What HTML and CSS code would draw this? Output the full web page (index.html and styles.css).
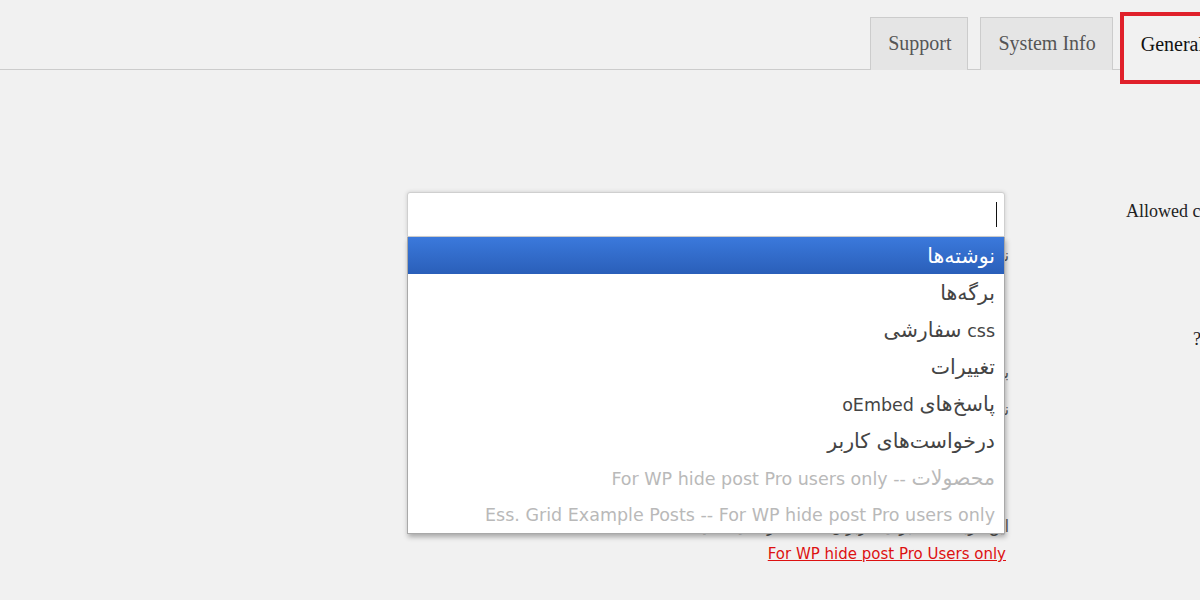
FILE: index.html
```html
<!DOCTYPE html>
<html lang="fa">
<head>
    <meta charset="UTF-8">
    <meta name="viewport" content="width=device-width, initial-scale=1.0">
    <title>WP Hide Post - General</title>
    <link rel="stylesheet" href="styles.css">
</head>
<body>
    <div class="wrap">
        <nav class="tabs">
            <a class="tab" href="#">Support</a>
            <a class="tab" href="#">System Info</a>
            <a class="tab active" href="#">General</a>
        </nav>

        <div class="settings">
            <div class="field">
                <div class="chosen">
                    <div class="search"><span class="caret"></span></div>
                    <ul class="results">
                        <li class="option highlighted"><span class="fa">نوشته‌ها</span></li>
                        <li class="option"><span class="fa">برگه‌ها</span></li>
                        <li class="option">css <span class="fa">سفارشی</span></li>
                        <li class="option"><span class="fa">تغییرات</span></li>
                        <li class="option"><span class="fa">پاسخ‌های</span> oEmbed</li>
                        <li class="option"><span class="fa">درخواست‌های کاربر</span></li>
                        <li class="option disabled"><span class="fa">محصولات</span> -- For WP hide post Pro users only</li>
                        <li class="option disabled">Ess. Grid Example Posts -- For WP hide post Pro users only</li>
                    </ul>
                </div>
                <div class="hints">
                    <p class="hint">نوع نوشته‌هایی که می‌خواهید پنهان شوند:</p>
                    <p class="hint low">برای پنهان کردن، نوع نوشته را انتخاب کنید.</p>
                    <p class="hint">نوشته‌ها را از صفحه اصلی و جستجو پنهان کنید.</p>
                    <p class="hint bottom">این گزینه فقط برای کاربران نسخه حرفه‌ای فعال است،</p>
                </div>
                <a class="pro-link" href="#">For WP hide post Pro Users only</a>
            </div>

            <div class="labels">
                <div class="label">Allowed custom post types</div>
                <div class="label second">? Hide on search</div>
            </div>
        </div>
    </div>
</body>
</html>
```

FILE: styles.css
```css
body {
    margin: 0;
    background-color: #f1f1f1;
    font-family: "DejaVu Sans", Tahoma, sans-serif;
    overflow: hidden;
}

.wrap {
    width: 1222px;
}

/* tabs */
.tabs {
    display: flex;
    justify-content: flex-end;
    align-items: flex-start;
    gap: 12px;
    height: 69px;
    border-bottom: 1px solid #cccccc;
}

.tab {
    margin-top: 17px;
    height: 52px;
    line-height: 50px;
    padding: 0 16px 0 17px;
    background-color: #e5e5e5;
    border: 1px solid #cccccc;
    border-bottom: none;
    color: #555555;
    font-family: "Liberation Serif", "Times New Roman", serif;
    font-size: 20px;
    text-decoration: none;
}

.tab.active {
    margin-top: 12px;
    margin-left: -5px;
    height: 64px;
    line-height: 57px;
    padding: 0 14px 0 17px;
    background-color: #f1f1f1;
    border: 4px solid #e0202b;
    color: #111111;
}

/* settings row */
.settings {
    display: flex;
    align-items: flex-start;
}

.field {
    margin-left: 407px;
    margin-top: 122px;
    width: 602px;
    direction: rtl;
}

.chosen {
    position: relative;
    width: 598px;
    margin-right: 4px;
}

.search {
    height: 43px;
    background-color: #ffffff;
    border: 1px solid #cfcfcf;
    border-radius: 3px 3px 0 0;
    box-shadow: 0 0 4px rgba(0, 0, 0, 0.15);
    display: flex;
    align-items: center;
    padding-right: 7px;
}

.caret {
    display: block;
    width: 1px;
    height: 25px;
    background-color: #111111;
}

.results {
    position: absolute;
    top: 45px;
    left: 0;
    right: 0;
    z-index: 2;
    margin: 0;
    padding: 0;
    list-style: none;
    background-color: #ffffff;
    border: 1px solid #a9a9a9;
    border-top: none;
    box-shadow: 1px 3px 5px rgba(0, 0, 0, 0.3);
}

.option {
    height: 37px;
    line-height: 38px;
    padding: 0 9px;
    font-size: 17.5px;
    color: #444444;
    white-space: nowrap;
}

.option .fa {
    font-size: 20.5px;
}

.option.highlighted {
    background: linear-gradient(#3b79dc, #2a5fb9);
    color: #ffffff;
}

.option.disabled {
    color: #b9b9b9;
}

/* text lying under the open list */
.hints {
    height: 307px;
    overflow: hidden;
}

.hint {
    margin: 0;
    height: 37px;
    line-height: 37px;
    font-size: 17px;
    font-stretch: condensed;
    color: #555555;
    white-space: nowrap;
}

.hint.low {
    margin-top: 80px;
}

.hint.bottom {
    margin-top: 80px;
}

.pro-link {
    display: block;
    margin-right: 3px;
    line-height: 20px;
    font-size: 15px;
    color: #dd1111;
}

.labels {
    margin-left: 117px;
    margin-top: 130px;
    font-family: "Liberation Serif", "Times New Roman", serif;
    font-size: 18px;
    color: #222222;
}

.label {
    line-height: 22px;
    white-space: nowrap;
}

.label.second {
    margin-top: 106px;
    margin-left: 67px;
}
```
